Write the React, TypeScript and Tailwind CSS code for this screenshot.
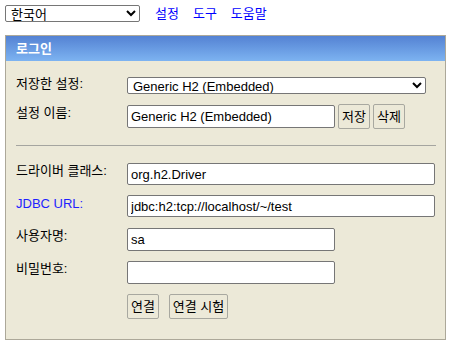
import React from "react";

const font = "font-['Liberation_Sans','Noto_Sans_CJK_KR',sans-serif]";

function Btn({ children, w }: { children: React.ReactNode; w: string }) {
  return (
    <button
      className={`${w} h-[25px] border border-[#a8a8a0] rounded-[2px] bg-[#ece9d8] text-[13px] text-black leading-[16px] flex items-center justify-center p-0`}
    >
      {children}
    </button>
  );
}

function Label({ children, blue }: { children: React.ReactNode; blue?: boolean }) {
  return (
    <div className={`w-[111px] shrink-0 leading-[16px] ${blue ? "text-[#1f1fff]" : "text-black"}`}>
      {children}
    </div>
  );
}

function Input({ value, w, h }: { value: string; w: string; h: string }) {
  return (
    <input
      readOnly
      value={value}
      className={`${w} ${h} border border-[#767676] rounded-[2px] bg-white px-[3px] text-[13px] text-black outline-none`}
    />
  );
}

export default function App() {
  return (
    <div className={`${font} text-[13px] leading-[16px] bg-white w-[452px] h-[347px] overflow-hidden`}>
      <div className="flex items-center pl-[5px] pt-[5px] h-[22px]">
        <select className="w-[135px] h-[17px] border border-[#767676] rounded-[2px] bg-white text-[13px] text-black pl-[1px] leading-[15px]">
          <option>한국어</option>
        </select>
        <div className="flex gap-[14px] ml-[15px] text-[#0000ff] leading-[17px]">
          <span>설정</span>
          <span>도구</span>
          <span>도움말</span>
        </div>
      </div>
      <div className="ml-[5px] mt-[13px] w-[441px] border border-[#aca899] bg-[#ece9d8]">
        <div className="h-[25px] bg-gradient-to-b from-[#5482d3] to-[#7db3f1] flex items-center pl-[10px] text-white font-bold">
          로그인
        </div>
        <div className="pl-[10px] pr-[9px] pt-[16px] pb-[20px]">
          <div className="flex items-start">
            <div className="-mt-px">
              <Label>저장한 설정:</Label>
            </div>
            <select className="w-[299px] h-[17px] border border-[#767676] rounded-[2px] bg-white text-[13px] text-black pl-[1px] leading-[15px]">
              <option>Generic H2 (Embedded)</option>
            </select>
          </div>
          <div className="flex items-start mt-[10px]">
            <div className="mt-px">
              <Label>설정 이름:</Label>
            </div>
            <div className="mt-px">
              <Input value="Generic H2 (Embedded)" w="w-[208px]" h="h-[23px]" />
            </div>
            <div className="ml-[3px] flex gap-[3px]">
              <Btn w="w-[32px]">저장</Btn>
              <Btn w="w-[32px]">삭제</Btn>
            </div>
          </div>
          <div className="mt-[16px] border-t border-[#a5a5a0]" />
          <div className="flex items-start mt-[17px]">
            <Label>드라이버 클래스:</Label>
            <Input value="org.h2.Driver" w="w-[308px]" h="h-[22px]" />
          </div>
          <div className="flex items-start mt-[10px]">
            <div className="mt-px">
              <Label blue>JDBC URL:</Label>
            </div>
            <Input value="jdbc:h2:tcp://localhost/~/test" w="w-[308px]" h="h-[22px]" />
          </div>
          <div className="flex items-start mt-[11px]">
            <Label>사용자명:</Label>
            <Input value="sa" w="w-[208px]" h="h-[23px]" />
          </div>
          <div className="flex items-start mt-[10px]">
            <Label>비밀번호:</Label>
            <Input value="" w="w-[208px]" h="h-[23px]" />
          </div>
          <div className="flex items-start mt-[10px] pl-[111px] gap-[10px]">
            <Btn w="w-[32px]">연결</Btn>
            <Btn w="w-[59px]">연결 시험</Btn>
          </div>
        </div>
      </div>
    </div>
  );
}
